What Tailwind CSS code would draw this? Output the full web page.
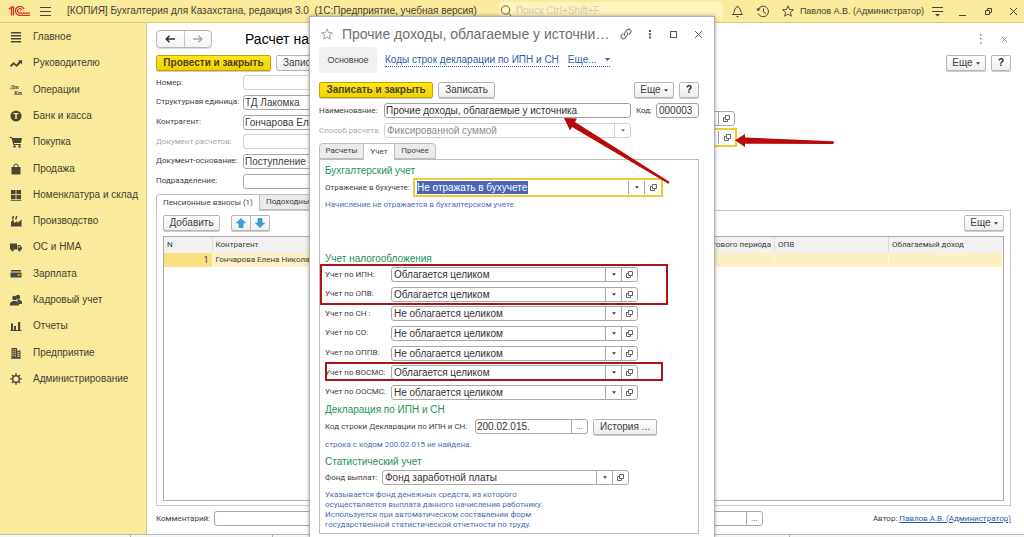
<!DOCTYPE html>
<html lang="ru">
<head>
<meta charset="utf-8">
<meta name="viewport" content="width=device-width, initial-scale=1">
<title>Бухгалтерия для Казахстана</title>
<script src="https://cdn.jsdelivr.net/npm/@tailwindcss/browser@4"></script>
</head>
<body class="relative flex h-screen flex-col overflow-hidden bg-white font-[Roboto,sans-serif] text-[8px] leading-3 text-[#404040]">

<!-- Shared symbols -->
<svg class="hidden" aria-hidden="true">
  <symbol id="open" viewBox="0 0 9 9"><path d="M3.500 1.500h4v4h-4z M3.500 3.500h-2v4h4v-2" fill="none" stroke="#666" stroke-width="1"/></symbol>
  <symbol id="caret" viewBox="0 0 5 3"><path d="M0 0h5L2.500 3z" fill="currentColor"/></symbol>
  <symbol id="star" viewBox="0 0 12 12"><path d="M6 .8l1.500 3.700 3.900.3-3 2.500 1 3.900L6 9.100l-3.400 2.100 1-3.900-3-2.500 3.900-.3z" fill="none" stroke="currentColor" stroke-width=".9"/></symbol>
  <symbol id="close" viewBox="0 0 9 9"><path d="M1 1l7 7M8 1L1 8" fill="none" stroke="currentColor" stroke-width="1"/></symbol>
</svg>

<!-- Title bar -->
<header class="flex h-[23px] shrink-0 items-center border-b border-[#d8c98a] bg-[#f9ea9c] pr-1.5 pl-2 text-[#44432f] font-['Liberation_Sans',sans-serif]">
  <svg class="h-[11px] w-[22px] shrink-0" viewBox="0 0 22 11" fill="none" stroke="#d2322b" aria-label="1С"><path d="M.8 3.200L3.500 1.200V9.500M5.500 .5V9.500M3.500 1.500L5.500 .6" stroke-width="1.300"/><path d="M16 3.200A4.400 4.400 0 1 0 12.200 9.300H22M14 4A2.300 2.300 0 1 0 12.300 7.200H22M12.300 5.200H13" stroke-width="1.200"/></svg>
  <button class="ml-2.5 h-[11px] w-[11px]" aria-label="Меню"><svg viewBox="0 0 11 11" class="block h-full w-full"><path d="M0 1.500h11M0 5.500h11M0 9.500h11" stroke="#4a4636"/></svg></button>
  <div class="ml-4 text-[10px] whitespace-pre">[КОПИЯ] Бухгалтерия для Казахстана, редакция 3.0  (1С:Предприятие, учебная версия)</div>
  <div class="ml-auto flex items-center">
    <label class="flex h-[18px] w-[224px] items-center gap-1 rounded-sm bg-[#fcf3bd] pl-px">
      <svg class="h-3 w-3 shrink-0" viewBox="0 0 12 12" fill="none" stroke="#6b6546"><circle cx="5.500" cy="5" r="4.200"/><path d="M8.500 8l3 3.500"/></svg>
      <input class="w-full bg-transparent text-[10px] outline-none placeholder:text-[#d6cfa4]" placeholder="Поиск Ctrl+Shift+F" aria-label="Поиск">
    </label>
    <button class="ml-2 h-[13px] w-[13px]" aria-label="Уведомления"><svg viewBox="0 0 13 13" class="block h-full w-full" fill="none" stroke="#4a4636"><path d="M1.500 9.500C4 7.500 3 2 6.500 2S9 7.500 11.500 9.500zM6.500 2V.8"/><path d="M5 11h3l-1.500 1.500z" fill="#4a4636" stroke="none"/></svg></button>
    <button class="ml-3 h-[13px] w-[14px]" aria-label="История"><svg viewBox="0 0 14 13" class="block h-full w-full" fill="none" stroke="#4a4636"><path d="M2.500 4A5.300 5.300 0 1 1 2.300 8.500M7.500 3.500v3.500l2.500 1.500"/><path d="M.3 3.500h4.200L2.200 6.500z" fill="#4a4636" stroke="none"/></svg></button>
    <button class="ml-3 h-3 w-3" aria-label="Избранное"><svg class="block h-full w-full"><use href="#star"/></svg></button>
    <span class="ml-1.5 text-[9px] whitespace-nowrap">Павлов А.В. (Администратор)</span>
    <button class="ml-2 h-[11px] w-[11px]" aria-label="Сервис"><svg viewBox="0 0 11 11" class="block h-full w-full"><path d="M0 1.500h11M0 5.500h11" stroke="#4a4636"/><path d="M3 8h5L5.500 10.500z" fill="#4a4636"/></svg></button>
    <button class="ml-4 h-[9px] w-[7px]" aria-label="Свернуть"><svg viewBox="0 0 7 9" class="block h-full w-full"><path d="M0 8.500h7" stroke="#4a4636"/></svg></button>
    <button class="ml-[18px] h-[9px] w-[9px]" aria-label="Развернуть"><svg viewBox="0 0 9 9" class="block h-full w-full"><path d="M1.500 3.500h4v4h-4zM3.500 3.500v-2h4v4h-2" fill="none" stroke="#4a4636"/></svg></button>
    <button class="ml-4 h-[9px] w-[9px]" aria-label="Закрыть"><svg class="block h-full w-full"><use href="#close"/></svg></button>
  </div>
</header>

<div class="flex min-h-0 flex-1">
  <!-- Sections -->
  <nav class="w-[147px] shrink-0 border-r border-[#d9cb83] bg-[#f9ea9c] pt-px text-[10px] text-[#44432f] font-['Liberation_Sans',sans-serif]">
    <ul class="flex h-[368px] flex-col [&>li]:flex [&>li]:flex-1 [&_a]:flex [&_a]:items-center [&_a]:gap-[11px] [&_a]:pl-2.5 [&_a]:whitespace-nowrap [&_svg]:h-3 [&_svg]:w-3 [&_svg]:shrink-0 [&_svg]:fill-[#4b4736]">
      <li><a href="#"><svg viewBox="0 0 12 12"><path d="M1 1h10v1.500H1zM1 4h10v1.500H1zM1 7h10v1.500H1zM1 10h10v1.500H1z"/></svg>Главное</a></li>
      <li><a href="#"><svg viewBox="0 0 12 12"><path d="M0 8.500L3.500 5l3 2.500L9 4.500 8 3.300h4v3.900L10.700 6l-4 4-3-2.600L1.200 10z"/></svg>Руководителю</a></li>
      <li><a href="#"><svg viewBox="0 0 12 12" font-size="6" font-weight="bold" font-family="Liberation Serif" font-style="italic"><text x="0" y="5">Дт</text><text x="4" y="11">Кт</text></svg>Операции</a></li>
      <li><a href="#"><svg viewBox="0 0 12 12"><path fill-rule="evenodd" d="M6 .5a5.500 5.500 0 1 1 0 11a5.500 5.500 0 0 1 0-11M3.500 3v1.300H5.200V9h1.600V4.300h1.700V3z"/></svg>Банк и касса</a></li>
      <li><a href="#"><svg viewBox="0 0 12 12"><path d="M0 1h2l.6 1H12l-1 5H4l.2 1H11v1H3.300L1.500 2H0z"/><circle cx="4.500" cy="10.500" r="1.200"/><circle cx="9.500" cy="10.500" r="1.200"/></svg>Покупка</a></li>
      <li><a href="#"><svg viewBox="0 0 12 12"><path d="M1.500 4h9v7.500h-9z"/><path d="M4 6V3a2 2 0 0 1 4 0v3" style="fill:none" stroke="#4b4736"/></svg>Продажа</a></li>
      <li><a href="#"><svg viewBox="0 0 12 12"><path d="M1 1h4.600v4.300H1zM6.400 1H11v4.300H6.400zM1 6h4.600v4.300H1zM6.400 6H11v4.300H6.400zM.5 11h11v.8H.5z"/></svg>Номенклатура и склад</a></li>
      <li><a href="#"><svg viewBox="0 0 12 12"><path d="M1 11.500V6.500h1L2.500 5h1L4 6.500V8l3.500-2v2L11.500 4.500v7zM2 4.500L2.500 1h1.500L3.500 4.500zM5 4.500L6 1h1.500L6.500 4.500z"/></svg>Производство</a></li>
      <li><a href="#"><svg viewBox="0 0 12 12"><path fill-rule="evenodd" d="M0 2.500h7v6H0zM7.500 4H10l2 2.500v2H7.500zM8.500 5v1.500h2L9.500 5z"/><circle cx="2.500" cy="9" r="1.400"/><circle cx="9.500" cy="9" r="1.400"/></svg>ОС и НМА</a></li>
      <li><a href="#"><svg viewBox="0 0 12 12"><path d="M1 2h10v1.500H1zM.500 4.500h11v5H.5zM7.500 6.500v1h3v-1z" fill-rule="evenodd"/></svg>Зарплата</a></li>
      <li><a href="#"><svg viewBox="0 0 12 12"><circle cx="8" cy="3" r="2.200"/><path d="M6.500 5.500l3 0 2.500 2V10H9z"/><circle cx="4.500" cy="4" r="2.300"/><path d="M0 11.500V9l2.800-2h3.200L9 9v2.500z"/></svg>Кадровый учет</a></li>
      <li><a href="#"><svg viewBox="0 0 12 12"><path d="M1 3.500h2V10H1zM4 6h2v4H4zM8 2h2.200v8H8zM.5 10h11v1H.5z"/></svg>Отчеты</a></li>
      <li><a href="#"><svg viewBox="0 0 12 12"><path fill-rule="evenodd" d="M1.500 1H7v2.500h3.500V11h.5v.700H1V11h.5zM2.500 2.200v1h1.300v-1zM4.700 2.200v1H6v-1zM2.500 4.200v1h1.300v-1zM4.700 4.200v1H6v-1zM2.500 6.200v1h1.300v-1zM4.700 6.200v1H6v-1zM2.500 8.200v1h1.300v-1zM4.700 8.200v1H6v-1zM7.300 4.700v1h2.200v-1zM7.300 6.700v1h2.200v-1zM7.300 8.700v1h2.200v-1z"/></svg>Предприятие</a></li>
      <li><a href="#"><svg viewBox="0 0 12 12"><circle cx="6" cy="6" r="3.300" style="fill:none" stroke="#4b4736" stroke-width="1.400"/><path d="M6 .3v2M6 9.700v2M.3 6h2M9.700 6h2M2 2l1.300 1.300M8.700 8.700L10 10M2 10l1.300-1.300M8.700 3.300L10 2" stroke="#4b4736" stroke-width="1.500"/></svg>Администрирование</a></li>
    </ul>
  </nav>

  <!-- Document form -->
  <main class="flex min-w-0 flex-1 flex-col pt-[7px] pr-[13px] pl-[9px]">
    <div class="flex h-[18px] items-center">
      <div class="flex h-[18px] w-[56px] rounded-sm border border-[#b5b5b5] bg-linear-to-b from-white to-[#f3f3f3] shadow-[0_1px_0_#ddd]">
        <button class="flex flex-1 items-center justify-center border-r border-[#c8c8c8]" aria-label="Назад"><svg class="h-2 w-2.5" viewBox="0 0 10 8"><path d="M10 4H2M4.500 .8L1.200 4l3.300 3.200" fill="none" stroke="#333" stroke-width="1.500"/></svg></button>
        <button class="flex flex-1 items-center justify-center" aria-label="Вперед"><svg class="h-2 w-2.5" viewBox="0 0 10 8"><path d="M0 4h8M5.500 .8L8.800 4 5.500 7.200" fill="none" stroke="#a5a5a5" stroke-width="1.500"/></svg></button>
      </div>
      <h1 class="ml-[33px] text-[14px] leading-[18px] whitespace-nowrap text-black font-['Liberation_Sans',sans-serif]">Расчет на</h1>
      <button class="ml-auto h-3 w-1" aria-label="Меню формы"><svg viewBox="0 0 4 12" class="block h-full w-full" fill="#888"><path d="M1 1h1.500v1.500H1zM1 5h1.500v1.500H1zM1 9h1.500v1.500H1z"/></svg></button>
      <button class="mr-[3px] ml-[18px] h-[7px] w-[7px] text-[#888]" aria-label="Закрыть форму"><svg class="block h-full w-full"><use href="#close"/></svg></button>
    </div>
    <div class="mt-[7px] flex h-4 items-stretch gap-[5px] text-[10px] leading-[14px] whitespace-nowrap font-['Liberation_Sans',sans-serif]">
      <button class="w-[115px] rounded-xs border border-[#c3a500] bg-linear-to-b from-[#ffe61a] to-[#f0d000] font-bold text-[#4a4320] shadow-[0_1px_0_#ccc]">Провести и закрыть</button>
      <button class="rounded-xs border border-[#b5b5b5] bg-linear-to-b from-white to-[#eee] px-1.5">Записать</button>
      <button class="ml-auto flex w-10 items-center justify-center gap-[3px] rounded-xs border border-[#b5b5b5] bg-linear-to-b from-white to-[#eee] shadow-[0_1px_0_#ccc]">Еще<svg class="h-[3px] w-1"><use href="#caret"/></svg></button>
      <button class="w-5 rounded-xs border border-[#b5b5b5] bg-linear-to-b from-white to-[#eee] font-bold text-[#222] shadow-[0_1px_0_#ccc]">?</button>
    </div>

    <div class="mt-[2px] flex">
      <div class="grid h-[118px] w-[345px] grid-rows-6 [&>div]:flex [&>div]:items-center [&_label]:w-[87px] [&_label]:shrink-0 [&_label]:whitespace-nowrap [&_input]:h-[15px] [&_input]:w-full [&_input]:min-w-0 [&_input]:rounded-[3px] [&_input]:border [&_input]:border-[#a8a8a8] [&_input]:pl-px [&_input]:text-[10px] [&_input]:outline-none [&_input]:font-['Liberation_Sans',sans-serif]">
        <div><label for="num">Номер:</label><input id="num" class="border-[#d0d0d0]!"></div>
        <div><label for="unit">Структурная единица:</label><input id="unit" value="ТД Лакомка"></div>
        <div><label for="agent">Контрагент:</label><input id="agent" value="Гончарова Елена Николаевна"></div>
        <div class="text-[#a5a5a5]"><label for="docs">Документ расчетов:</label><input id="docs" class="border-[#d0d0d0]!"></div>
        <div><label for="base">Документ-основание:</label><input id="base" value="Поступление ТМЗ и услуг"></div>
        <div><label for="dept">Подразделение:</label><input id="dept"></div>
      </div>
      <div class="flex w-[236px] flex-col items-end pt-[38px]">
        <div class="mr-[2px] flex h-[15px] w-[180px] rounded-[3px] border border-[#a8a8a8]">
          <input class="min-w-0 flex-1 outline-none" aria-label="Договор">
          <button class="flex w-4 items-center justify-center border-l border-[#a8a8a8]" aria-label="Открыть договор"><svg class="h-[9px] w-[9px]"><use href="#open"/></svg></button>
        </div>
        <div class="mt-[2px] flex h-[19px] w-[184px] border-2 border-[#efcb33]">
          <input class="min-w-0 flex-1 outline-none" aria-label="Начисление">
          <button class="my-px flex w-[17px] items-center justify-center border-l border-[#a8a8a8]" aria-label="Открыть начисление"><svg class="h-[9px] w-[9px]"><use href="#open"/></svg></button>
        </div>
      </div>
    </div>

    <div class="relative mt-[3px] flex h-[17px] shrink-0 leading-[14px]">
      <button class="w-[104px] rounded-tl-sm border border-b-0 border-[#bdbdbd] bg-white">Пенсионные взносы (1)</button>
      <button class="h-4 w-[90px] border border-l-0 border-[#bdbdbd] bg-[#ebebeb] pl-1.5 text-left whitespace-nowrap">Подоходный налог</button>
    </div>
    <section class="-mt-px flex min-h-0 flex-1 flex-col border border-[#c9c9c9] px-1.5 pt-1 pb-1">
      <div class="flex h-4 shrink-0 text-[10px] leading-[14px] font-['Liberation_Sans',sans-serif]">
        <button class="w-[57px] rounded-xs border border-[#b5b5b5] bg-linear-to-b from-white to-[#eee] shadow-[0_1px_0_#ccc]">Добавить</button>
        <div class="ml-[11px] flex w-[39px] rounded-xs border border-[#b5b5b5] bg-linear-to-b from-white to-[#eee] shadow-[0_1px_0_#ccc]">
          <button class="flex flex-1 items-center justify-center border-r border-[#b5b5b5]" aria-label="Вверх"><svg class="h-2.5 w-2.5" viewBox="0 0 10 10"><path d="M5 .5L9.500 5H7v4.500H3V5H.5z" fill="#36a3dd" stroke="#1f7fb8" stroke-width=".6"/></svg></button>
          <button class="flex flex-1 items-center justify-center" aria-label="Вниз"><svg class="h-2.5 w-2.5" viewBox="0 0 10 10"><path d="M5 9.500L.5 5H3V.5h4V5h2.500z" fill="#36a3dd" stroke="#1f7fb8" stroke-width=".6"/></svg></button>
        </div>
        <button class="ml-auto flex w-10 items-center justify-center gap-[3px] rounded-xs border border-[#b5b5b5] bg-linear-to-b from-white to-[#eee] shadow-[0_1px_0_#ccc]">Еще<svg class="h-[3px] w-1"><use href="#caret"/></svg></button>
      </div>
      <div class="mt-[5px] min-h-0 flex-1 border border-[#ababab]">
        <table class="w-full table-fixed border-collapse text-left">
          <colgroup><col class="w-12"><col class="w-[300px]"><col><col class="w-[114px]"><col class="w-[114px]"></colgroup>
          <thead><tr class="h-4 bg-[#f1f1f1] [&>th]:border-r [&>th]:border-[#dcdcdc] [&>th]:px-[3px] [&>th]:font-normal">
            <th>N</th><th>Контрагент</th><th class="text-right whitespace-nowrap">Месяц налогового периода</th><th>ОПВ</th><th class="border-r-0!">Облагаемый доход</th></tr></thead>
          <tbody><tr class="h-[14px] bg-[#fdf0c3] [&>td]:border-r [&>td]:border-[#fff8e0] [&>td]:px-[3px]">
            <td class="bg-[#fbdf85] text-right text-[9px]">1</td><td>Гончарова Елена Николаевна</td><td></td><td></td><td></td></tr></tbody>
        </table>
      </div>
    </section>
    <div class="flex h-[28px] shrink-0 items-center pb-[3px]">
      <label for="comment" class="w-[58px]">Комментарий:</label>
      <div class="flex h-[15px] w-[549px] rounded-[3px] border border-[#a8a8a8]">
        <input id="comment" class="min-w-0 flex-1 outline-none">
        <button class="w-4 border-l border-[#a8a8a8] leading-[10px]" aria-label="Выбрать комментарий">...</button>
      </div>
      <span class="ml-auto">Автор: <a href="#" class="text-[#2c5ea8] underline">Павлов А.В. (Администратор)</a></span>
    </div>
  </main>
</div>
<div class="flex h-[3px] shrink-0 border-t border-[#b9b9b9] bg-[#f7f7f7]">
  <div class="w-[131px] border-r border-[#aaa]"></div><div class="w-[142px] border-r border-[#aaa]"></div><div class="w-[517px] border-r border-[#aaa]"></div>
</div>

<!-- Pointer to the highlighted document field -->
<svg class="absolute top-[133px] left-[735px] h-[15px] w-[100px]" viewBox="0 0 100 15" aria-hidden="true"><path d="M0 7.300L10 1v3.500L98 8.300q2 1.200 0 2.700L10 10.700V14z" fill="#b80a0a"/></svg>

<!-- Accrual window -->
<div role="dialog" aria-label="Прочие доходы" class="absolute top-4 bottom-0 left-[309px] flex w-[406px] flex-col border border-b-0 border-[#b3b3b3] bg-white pt-[4px] pr-[15px] pl-[9px] shadow-[0_0_4px_rgba(0,0,0,0.35)]">
  <div class="flex h-[26px] shrink-0 items-center text-[#666]">
    <button class="ml-0.5 h-3 w-3 text-[#999]" aria-label="В избранное"><svg class="block h-full w-full"><use href="#star"/></svg></button>
    <h2 class="ml-[9px] text-[14px] leading-[18px] whitespace-nowrap text-[#6e6e6e] font-['Liberation_Sans',sans-serif]">Прочие доходы, облагаемые у источни…</h2>
    <button class="ml-auto h-3 w-3" aria-label="Ссылка"><svg viewBox="0 0 12 12" class="block h-full w-full" fill="none" stroke="#666" stroke-width="1.100"><path d="M5 7.500a2.300 2.300 0 0 1 0-3.200L7.300 1.700a2.200 2.200 0 0 1 3.100 3.100L9 6.300M7 4.500a2.300 2.300 0 0 1 0 3.200l-2.300 2.600a2.200 2.200 0 0 1-3.100-3.100L3 5.700"/></svg></button>
    <button class="ml-4 h-2.5 w-1" aria-label="Меню окна"><svg viewBox="0 0 4 10" class="block h-full w-full" fill="#555"><path d="M1 1h2v2H1zM1 4.200h2v2H1zM1 7.400h2v2H1z"/></svg></button>
    <button class="ml-[18px] h-[7px] w-[7px] border border-[#555]" aria-label="Развернуть окно"></button>
    <button class="-mr-1 ml-[17px] h-[9px] w-[9px]" aria-label="Закрыть окно"><svg class="block h-full w-full"><use href="#close"/></svg></button>
  </div>
  <div class="flex h-[26px] shrink-0 items-center text-[10px] text-[#2c5ea8] font-['Liberation_Sans',sans-serif]">
    <button class="h-full w-[58px] rounded-sm bg-[#f0f0f0] text-[9px] text-[#444]">Основное</button>
    <a href="#" class="ml-2 border-b border-dotted border-[#2c5ea8]">Коды строк декларации по ИПН и СН</a>
    <a href="#" class="ml-[9px] flex items-center gap-2 border-b border-dotted border-[#2c5ea8]">Еще...<svg class="h-[3px] w-[5px]"><use href="#caret"/></svg></a>
  </div>
  <div class="mt-[9px] flex h-4 shrink-0 gap-[5px] text-[10px] leading-[14px] whitespace-nowrap font-['Liberation_Sans',sans-serif]">
    <button class="w-[114px] rounded-xs border border-[#c3a500] bg-linear-to-b from-[#ffe61a] to-[#f0d000] font-bold text-[#4a4320] shadow-[0_1px_0_#ccc]">Записать и закрыть</button>
    <button class="w-[57px] rounded-xs border border-[#b5b5b5] bg-linear-to-b from-white to-[#eee] shadow-[0_1px_0_#ccc]">Записать</button>
    <button class="ml-auto flex w-10 items-center justify-center gap-[3px] rounded-xs border border-[#b5b5b5] bg-linear-to-b from-white to-[#eee] shadow-[0_1px_0_#ccc]">Еще<svg class="h-[3px] w-1"><use href="#caret"/></svg></button>
    <button class="w-5 rounded-xs border border-[#b5b5b5] bg-linear-to-b from-white to-[#eee] font-bold text-[#222] shadow-[0_1px_0_#ccc]">?</button>
  </div>
  <div class="mt-[5px] flex h-[15px] shrink-0 items-center">
    <label for="name" class="w-[65px]">Наименование:</label>
    <input id="name" value="Прочие доходы, облагаемые у источника" class="h-full w-[247px] rounded-[3px] border border-[#a0a0a0] pl-px text-[10px] text-[#333] outline-none font-['Liberation_Sans',sans-serif]">
    <label for="code" class="ml-auto">Код:</label>
    <input id="code" value="000003" class="ml-1 h-full w-[43px] rounded-[3px] border border-[#a0a0a0] pl-0.5 text-[10px] text-[#333] outline-none font-['Liberation_Sans',sans-serif]">
  </div>
  <div class="mt-[5px] flex h-[15px] shrink-0 items-center text-[#a8a8a8]">
    <label for="method" class="w-[65px] whitespace-nowrap">Способ расчета:</label>
    <div class="flex h-full w-[247px] rounded-[3px] border border-[#d2d2d2]">
      <select id="method" class="min-w-0 flex-1 appearance-none pl-0.5 text-[10px] leading-[13px] text-[#8c8c8c] outline-none font-['Liberation_Sans',sans-serif]"><option>Фиксированной суммой</option></select>
      <span class="flex w-4 items-center justify-center border-l border-[#d2d2d2]"><svg class="h-[3px] w-1 text-[#777]"><use href="#caret"/></svg></span>
    </div>
  </div>

  <div role="tablist" class="relative mt-[5px] flex h-[17px] shrink-0 leading-[14px] text-[#444]">
    <button role="tab" class="h-4 w-[45px] rounded-tl-sm border border-[#bdbdbd] bg-[#ebebeb]">Расчеты</button>
    <button role="tab" aria-selected="true" class="z-10 w-[30px] border-t border-[#bdbdbd] bg-white">Учет</button>
    <button role="tab" class="h-4 w-[42px] rounded-tr-sm border border-[#bdbdbd] bg-[#ebebeb]">Прочее</button>
  </div>
  <section class="-mt-px flex shrink-0 flex-col border border-[#bdbdbd] px-[5px] pt-[5px] pb-[3px]
    [&_h3]:text-[10px] [&_h3]:text-[#1c9350] [&_h3]:font-['Liberation_Sans',sans-serif] [&_p]:text-[#4f6bb5] [&_label]:shrink-0 [&_label]:whitespace-nowrap
    [&_select]:min-w-0 [&_select]:flex-1 [&_select]:appearance-none [&_select]:text-[10px] [&_select]:leading-[13px] [&_select]:text-[#333] [&_select]:outline-none [&_select]:font-['Liberation_Sans',sans-serif]">
    <h3>Бухгалтерский учет</h3>
    <div class="mt-px flex h-[19px] items-center">
      <label for="acc" class="w-[88px]">Отражение в бухучете:</label>
      <div class="flex h-full w-[250px] items-center border-2 border-[#efcb33] pl-0.5">
        <select id="acc" class="flex-none! bg-[#4a66b8] text-white!"><option>Не отражать в бухучете</option></select>
        <span class="ml-auto flex h-[13px] w-4 items-center justify-center border-l border-[#a8a8a8]"><svg class="h-[3px] w-1"><use href="#caret"/></svg></span>
        <button class="flex h-[13px] w-[17px] items-center justify-center border-l border-[#a8a8a8]" aria-label="Открыть"><svg class="h-[9px] w-[9px]"><use href="#open"/></svg></button>
      </div>
    </div>
    <p class="mt-0.5">Начисление не отражается в бухгалтерском учете</p>
    <h3 class="mt-[42px]">Учет налогообложения</h3>
    <div class="relative grid h-[137px] grid-rows-7 [&>div]:flex [&>div]:items-center [&>div>label]:w-[66px] [&>div>div]:flex [&>div>div]:h-[15px] [&>div>div]:w-[247px] [&>div>div]:rounded-[3px] [&>div>div]:border [&>div>div]:border-[#a8a8a8] [&>div>div]:pl-0.5 [&>div>div>span]:flex [&>div>div>span]:w-4 [&>div>div>span]:items-center [&>div>div>span]:justify-center [&>div>div>span]:border-l [&>div>div>span]:border-[#a8a8a8] [&_button]:flex [&_button]:w-4 [&_button]:items-center [&_button]:justify-center [&_button]:border-l [&_button]:border-[#a8a8a8] [&_span>svg]:h-[3px] [&_span>svg]:w-1 [&_button>svg]:h-[9px] [&_button>svg]:w-[9px]">
      <div><label for="t1">Учет по ИПН:</label><div><select id="t1"><option>Облагается целиком</option></select><span><svg><use href="#caret"/></svg></span><button aria-label="Открыть"><svg><use href="#open"/></svg></button></div></div>
      <div><label for="t2">Учет по ОПВ:</label><div><select id="t2"><option>Облагается целиком</option></select><span><svg><use href="#caret"/></svg></span><button aria-label="Открыть"><svg><use href="#open"/></svg></button></div></div>
      <div><label for="t3">Учет по СН :</label><div><select id="t3"><option>Не облагается целиком</option></select><span><svg><use href="#caret"/></svg></span><button aria-label="Открыть"><svg><use href="#open"/></svg></button></div></div>
      <div><label for="t4">Учет по СО:</label><div><select id="t4"><option>Не облагается целиком</option></select><span><svg><use href="#caret"/></svg></span><button aria-label="Открыть"><svg><use href="#open"/></svg></button></div></div>
      <div><label for="t5">Учет по ОППВ:</label><div><select id="t5"><option>Не облагается целиком</option></select><span><svg><use href="#caret"/></svg></span><button aria-label="Открыть"><svg><use href="#open"/></svg></button></div></div>
      <div><label for="t6">Учет по ВОСМС:</label><div><select id="t6"><option>Облагается целиком</option></select><span><svg><use href="#caret"/></svg></span><button aria-label="Открыть"><svg><use href="#open"/></svg></button></div></div>
      <div><label for="t7">Учет по ООСМС:</label><div><select id="t7"><option>Не облагается целиком</option></select><span><svg><use href="#caret"/></svg></span><button aria-label="Открыть"><svg><use href="#open"/></svg></button></div></div>
      <!-- Highlight frames -->
      <i class="pointer-events-none absolute -top-px -left-[5px] h-[41px] w-[348px] border-2 border-[#a81717]"></i>
      <i class="pointer-events-none absolute top-[97px] left-0 h-[19px] w-[338px] border-2 border-[#a81717]"></i>
    </div>
    <h3 class="mt-0.5">Декларация по ИПН и СН</h3>
    <div class="mt-[3px] flex h-[15px] items-center">
      <label for="line" class="w-[150px]">Код строки Декларации по ИПН и СН:</label>
      <div class="flex h-full w-[113px] rounded-[3px] border border-[#a8a8a8]">
        <input id="line" value="200.02.015." class="min-w-0 flex-1 pl-px text-[10px] text-[#333] outline-none font-['Liberation_Sans',sans-serif]">
        <button class="w-4 border-l border-[#a8a8a8] leading-[10px]" aria-label="Выбрать код">...</button>
      </div>
      <button class="ml-[5px] h-4 w-16 rounded-xs border border-[#b5b5b5] bg-linear-to-b from-white to-[#eee] text-[10px] shadow-[0_1px_0_#ccc] font-['Liberation_Sans',sans-serif]">История ...</button>
    </div>
    <p class="mt-[5px]">строка с кодом 200.02.015 не найдена.</p>
    <h3 class="mt-[5px]">Статистический учет</h3>
    <div class="mt-0.5 flex h-[15px] items-center">
      <label for="fund" class="w-[57px]">Фонд выплат:</label>
      <div class="flex h-full w-[247px] rounded-[3px] border border-[#a8a8a8] pl-0.5">
        <select id="fund"><option>Фонд заработной платы</option></select>
        <span class="flex w-4 items-center justify-center border-l border-[#a8a8a8]"><svg class="h-[3px] w-1"><use href="#caret"/></svg></span>
        <button class="flex w-4 items-center justify-center border-l border-[#a8a8a8]" aria-label="Открыть"><svg class="h-[9px] w-[9px]"><use href="#open"/></svg></button>
      </div>
    </div>
    <p class="mt-[5px] leading-[10px]">Указывается фонд денежных средств, из которого<br>осуществляется выплата данного начисления работнику.<br>Используется при автоматическом составлении форм<br>государственной статистической отчетности по труду.</p>
  </section>
  <!-- Pointer to the name field -->
  <svg class="pointer-events-none absolute top-[101px] left-[254px] h-[67px] w-[107px]" viewBox="0 0 107 67" aria-hidden="true"><path d="M0 0L13 .5L11 4L105 63.500q1 2-1 2L8 9L6 12.500z" fill="#b80a0a"/></svg>
</div>
</body>
</html>
